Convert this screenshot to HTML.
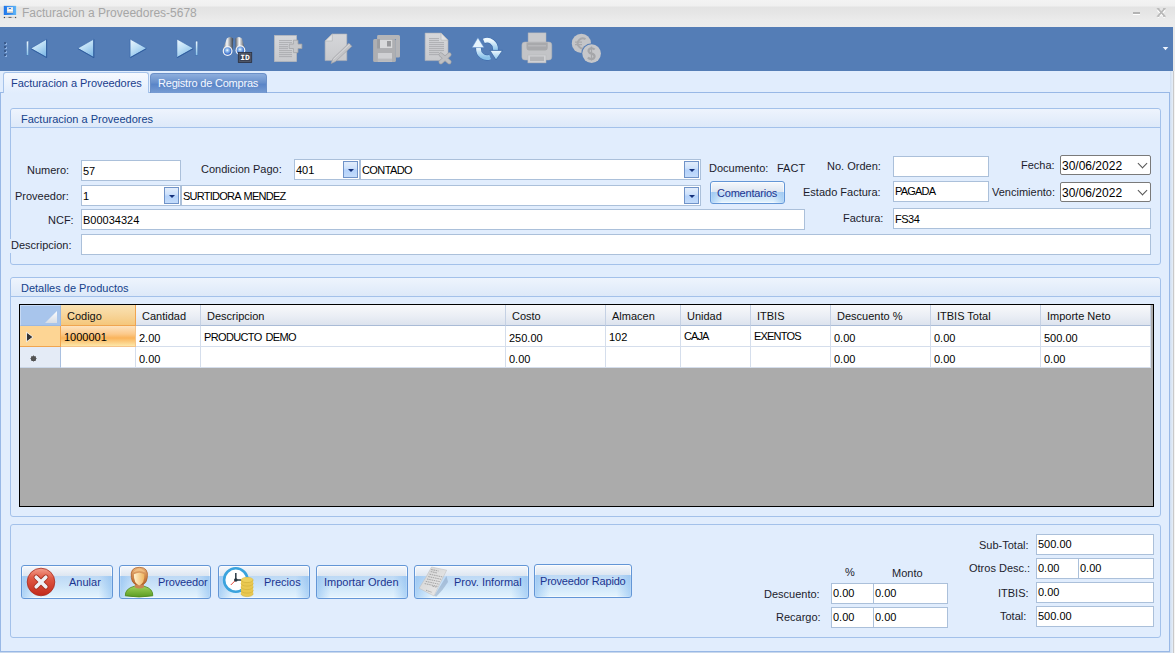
<!DOCTYPE html>
<html><head><meta charset="utf-8">
<style>
*{box-sizing:border-box;margin:0;padding:0}
html,body{width:1175px;height:653px;overflow:hidden;background:#e1edfd;font-family:"Liberation Sans",sans-serif;font-size:11px;color:#000}
.a{position:absolute;white-space:nowrap}
#title{left:0;top:0;width:1175px;height:27px;background:linear-gradient(#f3f3f3,#f0f0f0 6px,#e3e3e3 7px,#e5e5e5 12px,#ebebeb 20px,#ececec)}
#title .t{left:22px;top:6px;font-size:12px;color:#a6a6a6}
#tb{left:0;top:27px;width:1173px;height:44px;background:#547db6}
#rstrip{left:1170px;top:71px;width:5px;height:582px;background:linear-gradient(90deg,#cfdef2,#e2ebf6 50%,#c9c9c9 60%,#c9c9c9 80%,#f4f4f4 80%)}
#rstrip2{left:1173px;top:27px;width:2px;height:44px;background:#e9e9e9}
.tab-act{left:3px;top:72px;width:146px;letter-spacing:-0.05px;height:21px;background:linear-gradient(#f6f9fe,#e1edfd);border:1px solid #a6c3ea;border-bottom:none;border-radius:3px 3px 0 0;color:#1a3d8c;padding:4px 0 0 7px;z-index:2}
.tab-in{left:150px;top:73px;width:117px;height:20px;background:linear-gradient(#8eaedd,#6890cc 45%,#5a85c8 55%,#779cd3);border:1px solid #6b90c8;border-bottom:none;border-radius:4px 4px 0 0;color:#f5f8ff;padding:3px 0 0 7px;letter-spacing:-0.2px}
#page{left:0;top:92px;width:1170px;height:560px;border:1px solid #98b8e6;background:#e1edfd}
.grp{border:1px solid #a3c1ea;border-radius:3px;background:#e1edfd}
.gh{left:0;top:0;right:0;height:19px;background:linear-gradient(#eef4fd,#dde9f9);border-bottom:1px solid #a3c1ea;color:#15428b;padding:4px 0 0 10px;border-radius:3px 3px 0 0}
.l{color:#1c1c2c}
.tx{background:#fff;border:1px solid #abc0da;padding:3px 0 0 1px;overflow:hidden;color:#000}
.dd{width:15px;height:17px;border:1px solid #7093c8;background:linear-gradient(#e2edfc,#cfe2fb 40%,#b4d2fb 55%,#c4dcfb)}
.dd:after{content:"";position:absolute;left:4px;top:7px;border-left:3px solid transparent;border-right:3px solid transparent;border-top:3px solid #14307a}
.dp{background:#fff;border:1px solid #7a7a7a;border-radius:2px;font-size:12px;padding:3px 0 0 1px}
.dp:after{content:"";position:absolute;left:78px;top:4px;width:6px;height:6px;border-right:1px solid #555;border-bottom:1px solid #555;transform:rotate(45deg)}
.btn{border:1px solid #6396d6;border-radius:3px;background:linear-gradient(#f5f8fc,#dde6f1 31%,#bdd9f5 32%,#cde5f9 65%,#e1f2fd 94%);color:#1b3590;box-shadow:inset 0 0 0 1px rgba(255,255,255,.6)}
.btn:before{content:"";position:absolute;left:0;top:31%;right:0;bottom:0;background:linear-gradient(90deg,rgba(130,185,240,.55),rgba(255,255,255,0) 15%,rgba(255,255,255,0) 85%,rgba(130,185,240,.55))}
.btn span{position:absolute}
.btn2{background:linear-gradient(#f5f8fc,#dde6f1 47%,#bdd9f5 48%,#cde5f9 70%,#e1f2fd 94%)}
.btn2:before{top:48%}
/* grid */
#grid{left:19px;top:304px;width:1135px;height:203px;border:1px solid #000;background:#ababab;overflow:hidden}
.hc{top:0;height:21px;background:linear-gradient(#f8f9fb,#e9edf4 60%,#dde3ee);border-right:1px solid #c5d1e4;border-bottom:1px solid #a9bbd6;padding:5px 0 0 6px;color:#111}
.c{height:21px;background:#fff;border-right:1px solid #d5deec;border-bottom:1px solid #d5deec;padding:5px 0 0 3px;color:#000}
.hsel{background:linear-gradient(#f9e2b4,#f7d59a 50%,#f5c77b);border-right:1px solid #f0a550;border-bottom:1px solid #f0a550}
.csel{background:linear-gradient(#fde3bf,#fcc98a 40%,#fab35a 60%,#fde7a9);border-right:1px solid #f4c48a;border-bottom:1px solid #f4c48a}
.corner{background:#a8c5ec;border:1px solid #c6d9f3;border-right:1px solid #9ab8e2;border-bottom:1px solid #9ab8e2}
.rh1{background:#fdd594;border-right:1px solid #f0a550;border-bottom:1px solid #f0a550}
.rh2{background:#e4ebf6;border-right:1px solid #a9c0e0;border-bottom:1px solid #c9d6e8}
</style></head><body>
<div id="title" class="a">
  <svg class="a" style="left:0;top:0" width="22" height="22" viewBox="0 0 22 22"><defs><linearGradient id="scr" x1="0" y1="0" x2="1" y2="0"><stop offset="0" stop-color="#1d74ea"/><stop offset="1" stop-color="#62b6f6"/></linearGradient><linearGradient id="win" x1="0" y1="0" x2="0" y2="1"><stop offset="0" stop-color="#f8f6f2"/><stop offset="1" stop-color="#d9d2c8"/></linearGradient></defs>
<rect x="3" y="5" width="14" height="10.2" fill="#fbf5ea"/><rect x="3.7" y="5.8" width="12.6" height="9.2" fill="url(#scr)"/><rect x="7" y="7.2" width="6" height="5.7" fill="url(#win)"/><rect x="8.8" y="8" width="2.2" height="1" fill="#3b78dc"/><rect x="7.3" y="10" width="5.4" height="1.1" fill="#fff"/><rect x="7" y="12.9" width="6" height="0.8" fill="#2a6fd0" opacity="0.6"/><path d="M4 17.4H16" stroke="#d0d0d0" stroke-width="1"/><rect x="3.8" y="16.9" width="1.2" height="1.2" fill="#444"/><rect x="15" y="16.9" width="1.2" height="1.2" fill="#555"/><rect x="8.5" y="16.9" width="3" height="1" fill="#666"/></svg>
  <div class="a t">Facturacion a Proveedores-5678</div>
  <div class="a" style="left:1133px;top:12px;width:7px;height:2px;background:#b3b3b3;box-shadow:0 1px 0 #fff"></div>
  <svg class="a" style="left:1156px;top:7px" width="11" height="11" viewBox="0 0 11 11"><path d="M1.8 2.2L8.8 9.6M8.8 2.2L1.8 9.6" stroke="#fff" stroke-width="2" transform="translate(0,0.8)"/><path d="M1.8 1.5L8.8 9.4M8.8 1.5L1.8 9.4" stroke="#b8b8b8" stroke-width="1.7"/><path d="M0.8 1.5H3.5M7 1.5H9.8M0.8 9.4H3.5M7 9.4H9.8" stroke="#bbbbbb" stroke-width="0.9"/></svg>
</div>
<div id="tb" class="a"></div>
<svg class="a" style="left:0;top:27px" width="1173" height="44" viewBox="0 27 1173 44">
<defs>
<linearGradient id="tri" x1="0" y1="0" x2="0.6" y2="1"><stop offset="0" stop-color="#eef8fe"/><stop offset="0.5" stop-color="#bfe0f6"/><stop offset="1" stop-color="#86bde8"/></linearGradient>
<linearGradient id="arr" x1="0" y1="0" x2="0" y2="1"><stop offset="0" stop-color="#eff9fe"/><stop offset="1" stop-color="#8ac2ea"/></linearGradient>
<linearGradient id="tube" x1="0" y1="0" x2="1" y2="0"><stop offset="0" stop-color="#5a6069"/><stop offset="0.4" stop-color="#f8f9fa"/><stop offset="0.72" stop-color="#8d939b"/><stop offset="1" stop-color="#3a4049"/></linearGradient>
<radialGradient id="lens" cx="0.45" cy="0.4" r="0.6"><stop offset="0" stop-color="#ffffff"/><stop offset="0.3" stop-color="#9cc6f2"/><stop offset="1" stop-color="#2a5cc0"/></radialGradient>
<linearGradient id="gpage" x1="0" y1="0" x2="0" y2="1"><stop offset="0" stop-color="#d6d7da"/><stop offset="1" stop-color="#c8c9cc"/></linearGradient>
</defs>
<!-- grip -->
<g fill="#8cafdf"><rect x="5" y="43" width="2" height="2"/><rect x="5" y="47" width="2" height="2"/><rect x="5" y="51" width="2" height="2"/><rect x="5" y="55" width="2" height="2"/></g>
<g fill="#3b5b8c"><rect x="4" y="42" width="2" height="2"/><rect x="4" y="46" width="2" height="2"/><rect x="4" y="50" width="2" height="2"/><rect x="4" y="54" width="2" height="2"/></g>
<!-- first -->
<g>
<rect x="26.4" y="41.1" width="2.2" height="14.1" fill="url(#arr)" stroke="#3866a8" stroke-width="0.4"/>
<path d="M30.7 48.4L46.6 39.2V57.4Z" fill="url(#tri)" stroke="#3463a6" stroke-width="0.6" stroke-linejoin="round"/><path d="M31.2 48.9L46.6 57.6V39.5" fill="none" stroke="#2d5a9c" stroke-width="0.9"/>
</g>
<!-- prev -->
<path d="M77.7 48.3L93.8 39.1V57.5Z" fill="url(#tri)" stroke="#3463a6" stroke-width="0.6" stroke-linejoin="round"/><path d="M78.2 48.8L93.8 57.7V39.4" fill="none" stroke="#2d5a9c" stroke-width="0.9"/>
<!-- next -->
<path d="M130.1 39.1L146.6 48.3L130.1 57.5Z" fill="url(#tri)" stroke="#3463a6" stroke-width="0.6" stroke-linejoin="round"/><path d="M146.2 48.8L130.4 57.7" fill="none" stroke="#2d5a9c" stroke-width="0.9"/>
<!-- last -->
<path d="M176.9 39.1L193.4 48.3L176.9 57.5Z" fill="url(#tri)" stroke="#3463a6" stroke-width="0.6" stroke-linejoin="round"/><path d="M193 48.8L177.2 57.7" fill="none" stroke="#2d5a9c" stroke-width="0.9"/>
<rect x="195.6" y="41.1" width="2.2" height="14.1" fill="url(#arr)" stroke="#3866a8" stroke-width="0.4"/>
<!-- binoculars -->
<g>
<path d="M226.8 38.5Q230 35.5 233.2 38.5L232.6 50L222.8 50Z" fill="url(#tube)"/>
<path d="M235.4 38.5Q238.7 35.5 242 38.5L245.2 50L235.6 50Z" fill="url(#tube)"/>
<circle cx="227.6" cy="51" r="4.9" fill="#f2f4f6"/>
<circle cx="227.6" cy="51" r="3.7" fill="url(#lens)"/>
<circle cx="240.4" cy="50.2" r="4.9" fill="#f2f4f6"/>
<circle cx="240.4" cy="50.2" r="3.7" fill="url(#lens)"/>
<rect x="238.2" y="52.3" width="13.6" height="10.4" fill="#3b4153" stroke="#262b38" stroke-width="0.6"/>
<rect x="239.2" y="53.3" width="11.6" height="8.4" fill="none" stroke="#5d6476" stroke-width="0.6"/>
<text x="245" y="60.4" font-family="Liberation Mono" font-weight="bold" font-size="8" fill="#fff" text-anchor="middle" style="text-rendering:geometricPrecision">ID</text>
</g>
<!-- new doc -->
<g>
<rect x="274.3" y="35.3" width="22.4" height="26.4" fill="url(#gpage)" stroke="#b3b4b7" stroke-width="0.6"/>
<g fill="#a9aaad"><rect x="279" y="40.2" width="13" height="0.9"/><rect x="279" y="42.2" width="13" height="0.9"/><rect x="279" y="44.2" width="9" height="0.9"/><rect x="279" y="46.2" width="9" height="1.1"/><rect x="279" y="48.2" width="9" height="0.9"/><rect x="279" y="50.2" width="13" height="0.9"/><rect x="279" y="52.2" width="13" height="0.9"/><rect x="279" y="54.2" width="13" height="0.9"/><rect x="279" y="56.2" width="13" height="0.9"/></g>
<path d="M293.4 40.2H298V44.1H301.9V48.5H298V52.6H293.4V48.5H289.2V44.1H293.4Z" fill="#c6c7ca" stroke="#a2a3a6" stroke-width="0.8"/>
</g>
<!-- edit doc -->
<g>
<path d="M332.3 34H346.8V60.6H325.1V41Z" fill="url(#gpage)" stroke="#b3b4b7" stroke-width="0.6"/>
<path d="M325.1 41L332.3 34V41Z" fill="#e1e2e4" stroke="#b0b1b4" stroke-width="0.6"/>
<path d="M348.8 43.2L351.8 46.3L335.4 61.6L331.2 63.4L332.8 58.6Z" fill="#c3c4c7" stroke="#a3a4a7" stroke-width="0.7" stroke-linejoin="round"/>
<path d="M333.5 59.5L349.8 44.3" stroke="#dadbdd" stroke-width="0.8"/>
</g>
<!-- save -->
<g>
<path d="M378.5 35H398.5Q400 35 400 36.5V56.3Q400 57.6 398.7 57.6H396V39.1H377.1V36.4Q377.1 35 378.5 35Z" fill="#b4b5b8"/>
<rect x="373.1" y="39.1" width="22.8" height="22.8" rx="1.5" fill="#aeafb2"/>
<rect x="377.1" y="39.1" width="15.2" height="9.4" fill="#9c9da0"/>
<rect x="380" y="39.6" width="12.3" height="8.6" fill="#d8d9db"/>
<rect x="387" y="41" width="3.9" height="5.5" fill="#97989b"/>
<rect x="377.9" y="53" width="14.1" height="8.7" fill="#cfd0d3"/>
<rect x="377.9" y="58.6" width="14.1" height="3.1" fill="#b9babd"/>
</g>
<!-- delete doc -->
<g>
<path d="M425.1 33.1H441L448 40.2V60.6H425.1Z" fill="url(#gpage)" stroke="#b3b4b7" stroke-width="0.6"/>
<path d="M441 33.1V40.2H448Z" fill="#e1e2e4" stroke="#b0b1b4" stroke-width="0.6"/>
<g fill="#a9aaad"><rect x="429" y="38.2" width="10" height="0.9"/><rect x="429" y="40.2" width="10" height="0.9"/><rect x="429" y="42.2" width="15" height="0.9"/><rect x="429" y="44.2" width="15" height="0.9"/><rect x="429" y="46.2" width="15" height="0.9"/><rect x="429" y="48.2" width="15" height="0.9"/><rect x="429" y="50.2" width="15" height="0.9"/><rect x="429" y="52.2" width="10" height="0.9"/><rect x="429" y="54.2" width="10" height="0.9"/></g>
<path d="M440.8 54.6L449.3 62M449.3 54.6L440.8 62" stroke="#a3a4a7" stroke-width="4.4" stroke-linecap="round"/>
<path d="M440.8 54.6L449.3 62M449.3 54.6L440.8 62" stroke="#bfc0c3" stroke-width="3" stroke-linecap="round"/>
</g>
<!-- refresh -->
<g>
<path d="M483.8 40.9A8.5 8.5 0 0 1 495.5 49.3V50.6" fill="none" stroke="#3566a8" stroke-width="5.6"/>
<path d="M490.2 57A8.5 8.5 0 0 1 478.5 48.7V47.4" fill="none" stroke="#3566a8" stroke-width="5.6"/>
<path d="M483.8 40.9A8.5 8.5 0 0 1 495.5 49.3V50.6" fill="none" stroke="url(#arr)" stroke-width="4.8"/>
<path d="M490.2 57A8.5 8.5 0 0 1 478.5 48.7V47.4" fill="none" stroke="url(#arr)" stroke-width="4.8"/>
<path d="M490 50.4H502.5L496 60Z" fill="url(#arr)" stroke="#2f5f9e" stroke-width="0.7" stroke-linejoin="round"/>
<path d="M472.1 47.6H484L477.9 37.7Z" fill="#e6f4fd" stroke="#5a8acb" stroke-width="0.5" stroke-linejoin="round"/>
</g>
<!-- printer -->
<g>
<rect x="528.1" y="32.9" width="17.9" height="12.6" fill="#c9cacd" stroke="#b5b6b9" stroke-width="0.5"/>
<rect x="521.9" y="42" width="29.9" height="18" rx="3" fill="#c3c4c7" stroke="#b1b2b5" stroke-width="0.5"/>
<path d="M526.5 42.5H547.7V48Q547.7 50.4 545.3 50.4H528.9Q526.5 50.4 526.5 48Z" fill="#a8a9ac"/>
<rect x="528.1" y="45" width="17.9" height="1.5" fill="#b7b8bb"/>
<rect x="527.9" y="55" width="18.1" height="7.9" fill="#d0d1d4" stroke="#b5b6b9" stroke-width="0.5"/>
<rect x="530" y="56.5" width="14" height="4.5" fill="#b4b5b8"/>
</g>
<!-- coins -->
<g>
<circle cx="581.4" cy="43.4" r="9.6" fill="#c4c5c8"/>
<path d="M585.5 39.2A5 5 0 1 0 585.5 47.6" fill="none" stroke="#a8a9ac" stroke-width="2"/>
<path d="M575 42.2H582M575 44.6H582" stroke="#a8a9ac" stroke-width="1.2"/>
<circle cx="591.6" cy="53.6" r="10.3" fill="#547db6"/>
<circle cx="591.6" cy="53.6" r="9.3" fill="#c6c7ca"/>
<path d="M594.6 49.5Q593 48 591 48.3Q588.3 48.8 588.6 51.2Q589 53 591.7 53.6Q594.6 54.3 594.6 56.4Q594.4 59 591.3 59Q589.2 59 587.9 57.5" fill="none" stroke="#a5a6a9" stroke-width="2.2"/>
<path d="M591.5 46.5V60.6" stroke="#a5a6a9" stroke-width="1.3"/>
</g>
<!-- dropdown -->
<path d="M1162.7 47H1168.3L1165.5 50.2Z" fill="#eef4fe"/>
</svg>
<div id="rstrip" class="a"></div><div id="rstrip2" class="a"></div><div class="a" style="left:0;top:652px;width:1170px;height:1px;background:#c9d8ec"></div>
<div id="page" class="a"></div>
<div class="a tab-act">Facturacion a Proveedores</div>
<div class="a tab-in">Registro de Compras</div>

<!-- group 1 -->
<div class="a grp" style="left:10px;top:108px;width:1151px;height:157px"><div class="a gh">Facturacion a Proveedores</div></div>
<!-- group 2 -->
<div class="a grp" style="left:10px;top:277px;width:1151px;height:240px"><div class="a gh">Detalles de Productos</div></div>
<!-- group 3 -->
<div class="a grp" style="left:10px;top:524px;width:1151px;height:114px"></div>

<!-- row 1 -->
<div class="a l" style="left:27px;top:164px">Numero:</div>
<div class="a tx" style="left:81px;top:160px;width:100px;height:21px;padding-top:4px">57</div>
<div class="a l" style="left:201px;top:163px">Condicion Pago:</div>
<div class="a tx" style="left:294px;top:159px;width:66px;height:21px;padding-top:4px">401</div>
<div class="a dd" style="left:343px;top:161px"></div>
<div class="a tx" style="left:360px;top:159px;width:341px;height:21px;padding-top:4px;letter-spacing:-0.6px">CONTADO</div>
<div class="a dd" style="left:684px;top:161px"></div>
<div class="a l" style="left:709px;top:162px">Documento:</div>
<div class="a l" style="left:777px;top:162px">FACT</div>
<div class="a l" style="left:827px;top:160px">No. Orden:</div>
<div class="a tx" style="left:893px;top:156px;width:96px;height:21px"></div>
<div class="a l" style="left:1021px;top:159px">Fecha:</div>
<div class="a dp" style="left:1060px;top:155px;width:91px;height:20px">30/06/2022</div>

<!-- row 2 -->
<div class="a l" style="left:15px;top:190px">Proveedor:</div>
<div class="a tx" style="left:81px;top:185px;width:100px;height:21px;padding-top:4px">1</div>
<div class="a dd" style="left:164px;top:187px"></div>
<div class="a tx" style="left:181px;top:185px;width:520px;height:21px;padding-top:4px;letter-spacing:-0.75px;word-spacing:1px">SURTIDORA MENDEZ</div>
<div class="a dd" style="left:684px;top:187px"></div>
<div class="a btn btn2" style="left:710px;top:181px;width:75px;height:23px"><span style="left:6px;top:5px;letter-spacing:-0.2px">Comentarios</span></div>
<div class="a l" style="left:803px;top:186px">Estado Factura:</div>
<div class="a tx" style="left:893px;top:181px;width:96px;height:21px;letter-spacing:-0.8px">PAGADA</div>
<div class="a l" style="left:992px;top:186px">Vencimiento:</div>
<div class="a dp" style="left:1060px;top:182px;width:91px;height:20px">30/06/2022</div>

<!-- row 3 -->
<div class="a l" style="left:48px;top:214px">NCF:</div>
<div class="a tx" style="left:81px;top:209px;width:724px;height:21px;padding-top:4px">B00034324</div>
<div class="a l" style="left:843px;top:212px">Factura:</div>
<div class="a tx" style="left:893px;top:208px;width:258px;height:21px;padding-top:4px;letter-spacing:-0.5px">FS34</div>

<!-- row 4 -->
<div class="a l" style="left:9px;top:239px;padding-left:2px;height:14px;background:#e1edfd">Descripcion:</div>
<div class="a tx" style="left:81px;top:234px;width:1070px;height:21px"></div>

<!-- grid -->
<div id="grid" class="a">
<div class="a corner" style="left:0;top:0;width:41px;height:21px"><svg class="a" style="left:24px;top:5px" width="13" height="13" viewBox="0 0 13 13"><defs><linearGradient id="tg" x1="0" y1="0" x2="0" y2="1"><stop offset="0" stop-color="#fbfcfe"/><stop offset="1" stop-color="#d7dde6"/></linearGradient></defs><path d="M0 12L12 0V12Z" fill="url(#tg)"/></svg></div>
<div class="a hc hsel" style="left:41px;width:75px">Codigo</div>
<div class="a hc" style="left:116px;width:65px">Cantidad</div>
<div class="a hc" style="left:181px;width:305px">Descripcion</div>
<div class="a hc" style="left:486px;width:100px">Costo</div>
<div class="a hc" style="left:586px;width:75px">Almacen</div>
<div class="a hc" style="left:661px;width:70px">Unidad</div>
<div class="a hc" style="left:731px;width:80px">ITBIS</div>
<div class="a hc" style="left:811px;width:100px">Descuento %</div>
<div class="a hc" style="left:911px;width:110px">ITBIS Total</div>
<div class="a hc" style="left:1021px;width:110px">Importe Neto</div>
<div class="a rh1" style="left:0;top:21px;width:41px;height:21px"><svg class="a" style="left:5px;top:5px" width="10" height="12" viewBox="0 0 10 12"><path d="M1.5 1.2L8 6L1.5 10.8Z" fill="#333" stroke="#fff" stroke-width="0.8" stroke-linejoin="round"/></svg></div>
<div class="a rh2" style="left:0;top:42px;width:41px;height:21px"><svg class="a" style="left:10px;top:8px" width="7" height="7" viewBox="0 0 7 7"><circle cx="3.5" cy="3.5" r="2.6" fill="#4a4a4a"/><path d="M3.5 0.4V6.6M0.4 3.5H6.6M1.3 1.3L5.7 5.7M5.7 1.3L1.3 5.7" stroke="#555" stroke-width="0.8"/></svg></div>
<div class="a c csel" style="left:41px;top:21px;width:75px;padding-top:5px;">1000001</div>
<div class="a c" style="left:116px;top:21px;width:65px;padding-top:6px;">2.00</div>
<div class="a c" style="left:181px;top:21px;width:305px;padding-top:5px;letter-spacing:-0.65px;word-spacing:1.5px;">PRODUCTO DEMO</div>
<div class="a c" style="left:486px;top:21px;width:100px;padding-top:6px;">250.00</div>
<div class="a c" style="left:586px;top:21px;width:75px;padding-top:5px;">102</div>
<div class="a c" style="left:661px;top:21px;width:70px;padding-top:4px;letter-spacing:-0.9px;">CAJA</div>
<div class="a c" style="left:731px;top:21px;width:80px;padding-top:4px;letter-spacing:-0.8px;">EXENTOS</div>
<div class="a c" style="left:811px;top:21px;width:100px;padding-top:6px;">0.00</div>
<div class="a c" style="left:911px;top:21px;width:110px;padding-top:6px;">0.00</div>
<div class="a c" style="left:1021px;top:21px;width:110px;padding-top:6px;">500.00</div>
<div class="a c" style="left:41px;top:42px;width:75px;padding-top:6px"></div>
<div class="a c" style="left:116px;top:42px;width:65px;padding-top:6px">0.00</div>
<div class="a c" style="left:181px;top:42px;width:305px;padding-top:6px"></div>
<div class="a c" style="left:486px;top:42px;width:100px;padding-top:6px">0.00</div>
<div class="a c" style="left:586px;top:42px;width:75px;padding-top:6px"></div>
<div class="a c" style="left:661px;top:42px;width:70px;padding-top:6px"></div>
<div class="a c" style="left:731px;top:42px;width:80px;padding-top:6px"></div>
<div class="a c" style="left:811px;top:42px;width:100px;padding-top:6px">0.00</div>
<div class="a c" style="left:911px;top:42px;width:110px;padding-top:6px">0.00</div>
<div class="a c" style="left:1021px;top:42px;width:110px;padding-top:6px">0.00</div>
</div>

<!-- buttons -->
<div class="a btn" style="left:21px;top:565px;width:92px;height:34px"><span style="left:47px;top:10px">Anular</span></div>
<div class="a btn" style="left:119px;top:565px;width:92px;height:34px"><span style="left:38px;top:10px;letter-spacing:-0.15px">Proveedor</span></div>
<div class="a btn" style="left:218px;top:565px;width:92px;height:34px"><span style="left:45px;top:10px">Precios</span></div>
<div class="a btn" style="left:316px;top:565px;width:92px;height:34px"><span style="left:7px;top:10px">Importar Orden</span></div>
<div class="a btn" style="left:414px;top:565px;width:115px;height:34px"><span style="left:39px;top:10px">Prov. Informal</span></div>
<div class="a btn" style="left:534px;top:564px;width:98px;height:34px"><span style="left:5px;top:10px;letter-spacing:-0.2px">Proveedor Rapido</span></div>

<svg class="a" style="left:0;top:560px;z-index:3" width="640" height="45" viewBox="0 560 640 45">
<defs>
<linearGradient id="red" x1="0" y1="0" x2="0" y2="1"><stop offset="0" stop-color="#f3a08e"/><stop offset="0.35" stop-color="#e05a45"/><stop offset="1" stop-color="#c2281a"/></linearGradient>
<linearGradient id="hair" x1="0" y1="0" x2="0" y2="1"><stop offset="0" stop-color="#e9b278"/><stop offset="1" stop-color="#b8652a"/></linearGradient>
<linearGradient id="face" x1="0" y1="0" x2="1" y2="0"><stop offset="0" stop-color="#fff2cf"/><stop offset="1" stop-color="#f0b560"/></linearGradient>
<linearGradient id="green" x1="0" y1="0" x2="0" y2="1"><stop offset="0" stop-color="#9fd25a"/><stop offset="1" stop-color="#5a9b22"/></linearGradient>
<linearGradient id="rcp" x1="0" y1="0" x2="1" y2="1"><stop offset="0" stop-color="#d2d2d2"/><stop offset="1" stop-color="#ececec"/></linearGradient>
</defs>
<!-- anular -->
<circle cx="41" cy="582" r="13.8" fill="url(#red)" stroke="#a82a1c" stroke-width="0.8"/>
<path d="M36.2 577.2L45.8 586.8M45.8 577.2L36.2 586.8" stroke="#a3301f" stroke-width="5.2" stroke-linecap="round"/>
<path d="M36.2 577.2L45.8 586.8M45.8 577.2L36.2 586.8" stroke="#eef1f6" stroke-width="3.6" stroke-linecap="round"/>
<!-- person -->
<path d="M125.3 595.8Q125 588.5 134.5 586.2L144 586.2Q153.2 588.5 152.8 595.8Q139 598.2 125.3 595.8Z" fill="url(#green)" stroke="#4a861c" stroke-width="0.8"/>
<path d="M135.5 582.5H143.2L144.2 587.2Q139.4 590 134.6 587.2Z" fill="#c98650"/>
<path d="M131.3 577.5Q129.8 567.3 139.3 567.3Q148.8 567.3 147.3 577.5Q146.8 582.5 143.6 584.2H135Q131.8 582.5 131.3 577.5Z" fill="url(#hair)" stroke="#a65a24" stroke-width="0.7"/>
<path d="M133.9 574.2Q139.2 571.2 144.4 574.2Q144.8 583 139.2 585.6Q133.6 583 133.9 574.2Z" fill="url(#face)"/>
<path d="M133 572.5Q139.3 569.5 145.6 572.5Q143 568.6 139.3 568.4Q135.5 568.6 133 572.5Z" fill="#f3c488" opacity="0.8"/>
<!-- clock -->
<circle cx="235.8" cy="580" r="11.7" fill="#fff" stroke="#3aa3dd" stroke-width="2.6"/>
<path d="M235.8 580V573" stroke="#34444f" stroke-width="1.6"/>
<path d="M235.8 580H241.5" stroke="#34444f" stroke-width="1.6"/>
<path d="M235.8 580L230.8 585" stroke="#e8483a" stroke-width="1"/>
<circle cx="235.8" cy="580" r="1.8" fill="#24333d"/>
<g fill="#e9c850" stroke="#cfae3a" stroke-width="0.6">
<ellipse cx="247.1" cy="594" rx="6" ry="2.6"/>
<rect x="241.1" y="590.5" width="12" height="3.5" stroke="none"/>
<ellipse cx="247.1" cy="590.5" rx="6" ry="2.6"/>
<rect x="241.1" y="587" width="12" height="3.5" stroke="none"/>
<ellipse cx="247.1" cy="587" rx="6" ry="2.6"/>
<rect x="241.1" y="583.5" width="12" height="3.5" stroke="none"/>
<ellipse cx="247.1" cy="583.5" rx="6" ry="2.6"/>
<rect x="241.1" y="580" width="12" height="3.5" stroke="none"/>
<ellipse cx="247.1" cy="580" rx="6" ry="2.6"/>
</g>
<ellipse cx="247.1" cy="579.6" rx="5.6" ry="2.3" fill="#edd05c"/>
<!-- receipt -->
<path d="M434 596L446.5 576L448 582Q443 590 436.5 596.5Z" fill="#7f97b5" opacity="0.45"/>
<path d="M431.5 567L446.7 570.2Q440 583 434 596L419.1 588.2Q426 578 431.5 567Z" fill="url(#rcp)" stroke="#bdbdbd" stroke-width="0.5"/>
<g stroke="#8a8a8a" stroke-width="0.8" stroke-dasharray="1.6 0.7" opacity="0.85">
<path d="M431.2 569.5L438.5 571"/>
<path d="M430.8 571.6L437.2 573"/>
<path d="M429.5 574.2L442.8 577"/>
<path d="M428.3 576.6L441.6 579.4"/>
<path d="M427 579L440.3 581.8"/>
<path d="M425.8 581.4L439 584.2"/>
<path d="M424.7 583.6L437.8 586.4"/>
<path d="M432.5 586.2L437 587.2"/>
<path d="M426 590.2L431.5 592.2"/>
</g>
</svg>
<!-- totals -->
<div class="a l" style="left:845px;top:566px">%</div>
<div class="a l" style="left:892px;top:567px">Monto</div>
<div class="a l" style="left:764px;top:588px">Descuento:</div>
<div class="a tx" style="left:831px;top:583px;width:43px;height:21px">0.00</div>
<div class="a tx" style="left:873px;top:583px;width:75px;height:21px">0.00</div>
<div class="a l" style="left:776px;top:611px">Recargo:</div>
<div class="a tx" style="left:831px;top:607px;width:43px;height:21px">0.00</div>
<div class="a tx" style="left:873px;top:607px;width:75px;height:21px">0.00</div>

<div class="a l" style="left:979px;top:539px">Sub-Total:</div>
<div class="a tx" style="left:1036px;top:534px;width:118px;height:21px">500.00</div>
<div class="a l" style="left:969px;top:562px">Otros Desc.:</div>
<div class="a tx" style="left:1036px;top:558px;width:43px;height:21px">0.00</div>
<div class="a tx" style="left:1078px;top:558px;width:76px;height:21px">0.00</div>
<div class="a l" style="left:998px;top:587px">ITBIS:</div>
<div class="a tx" style="left:1036px;top:582px;width:118px;height:21px">0.00</div>
<div class="a l" style="left:1000px;top:610px">Total:</div>
<div class="a tx" style="left:1036px;top:606px;width:118px;height:21px">500.00</div>
</body></html>
